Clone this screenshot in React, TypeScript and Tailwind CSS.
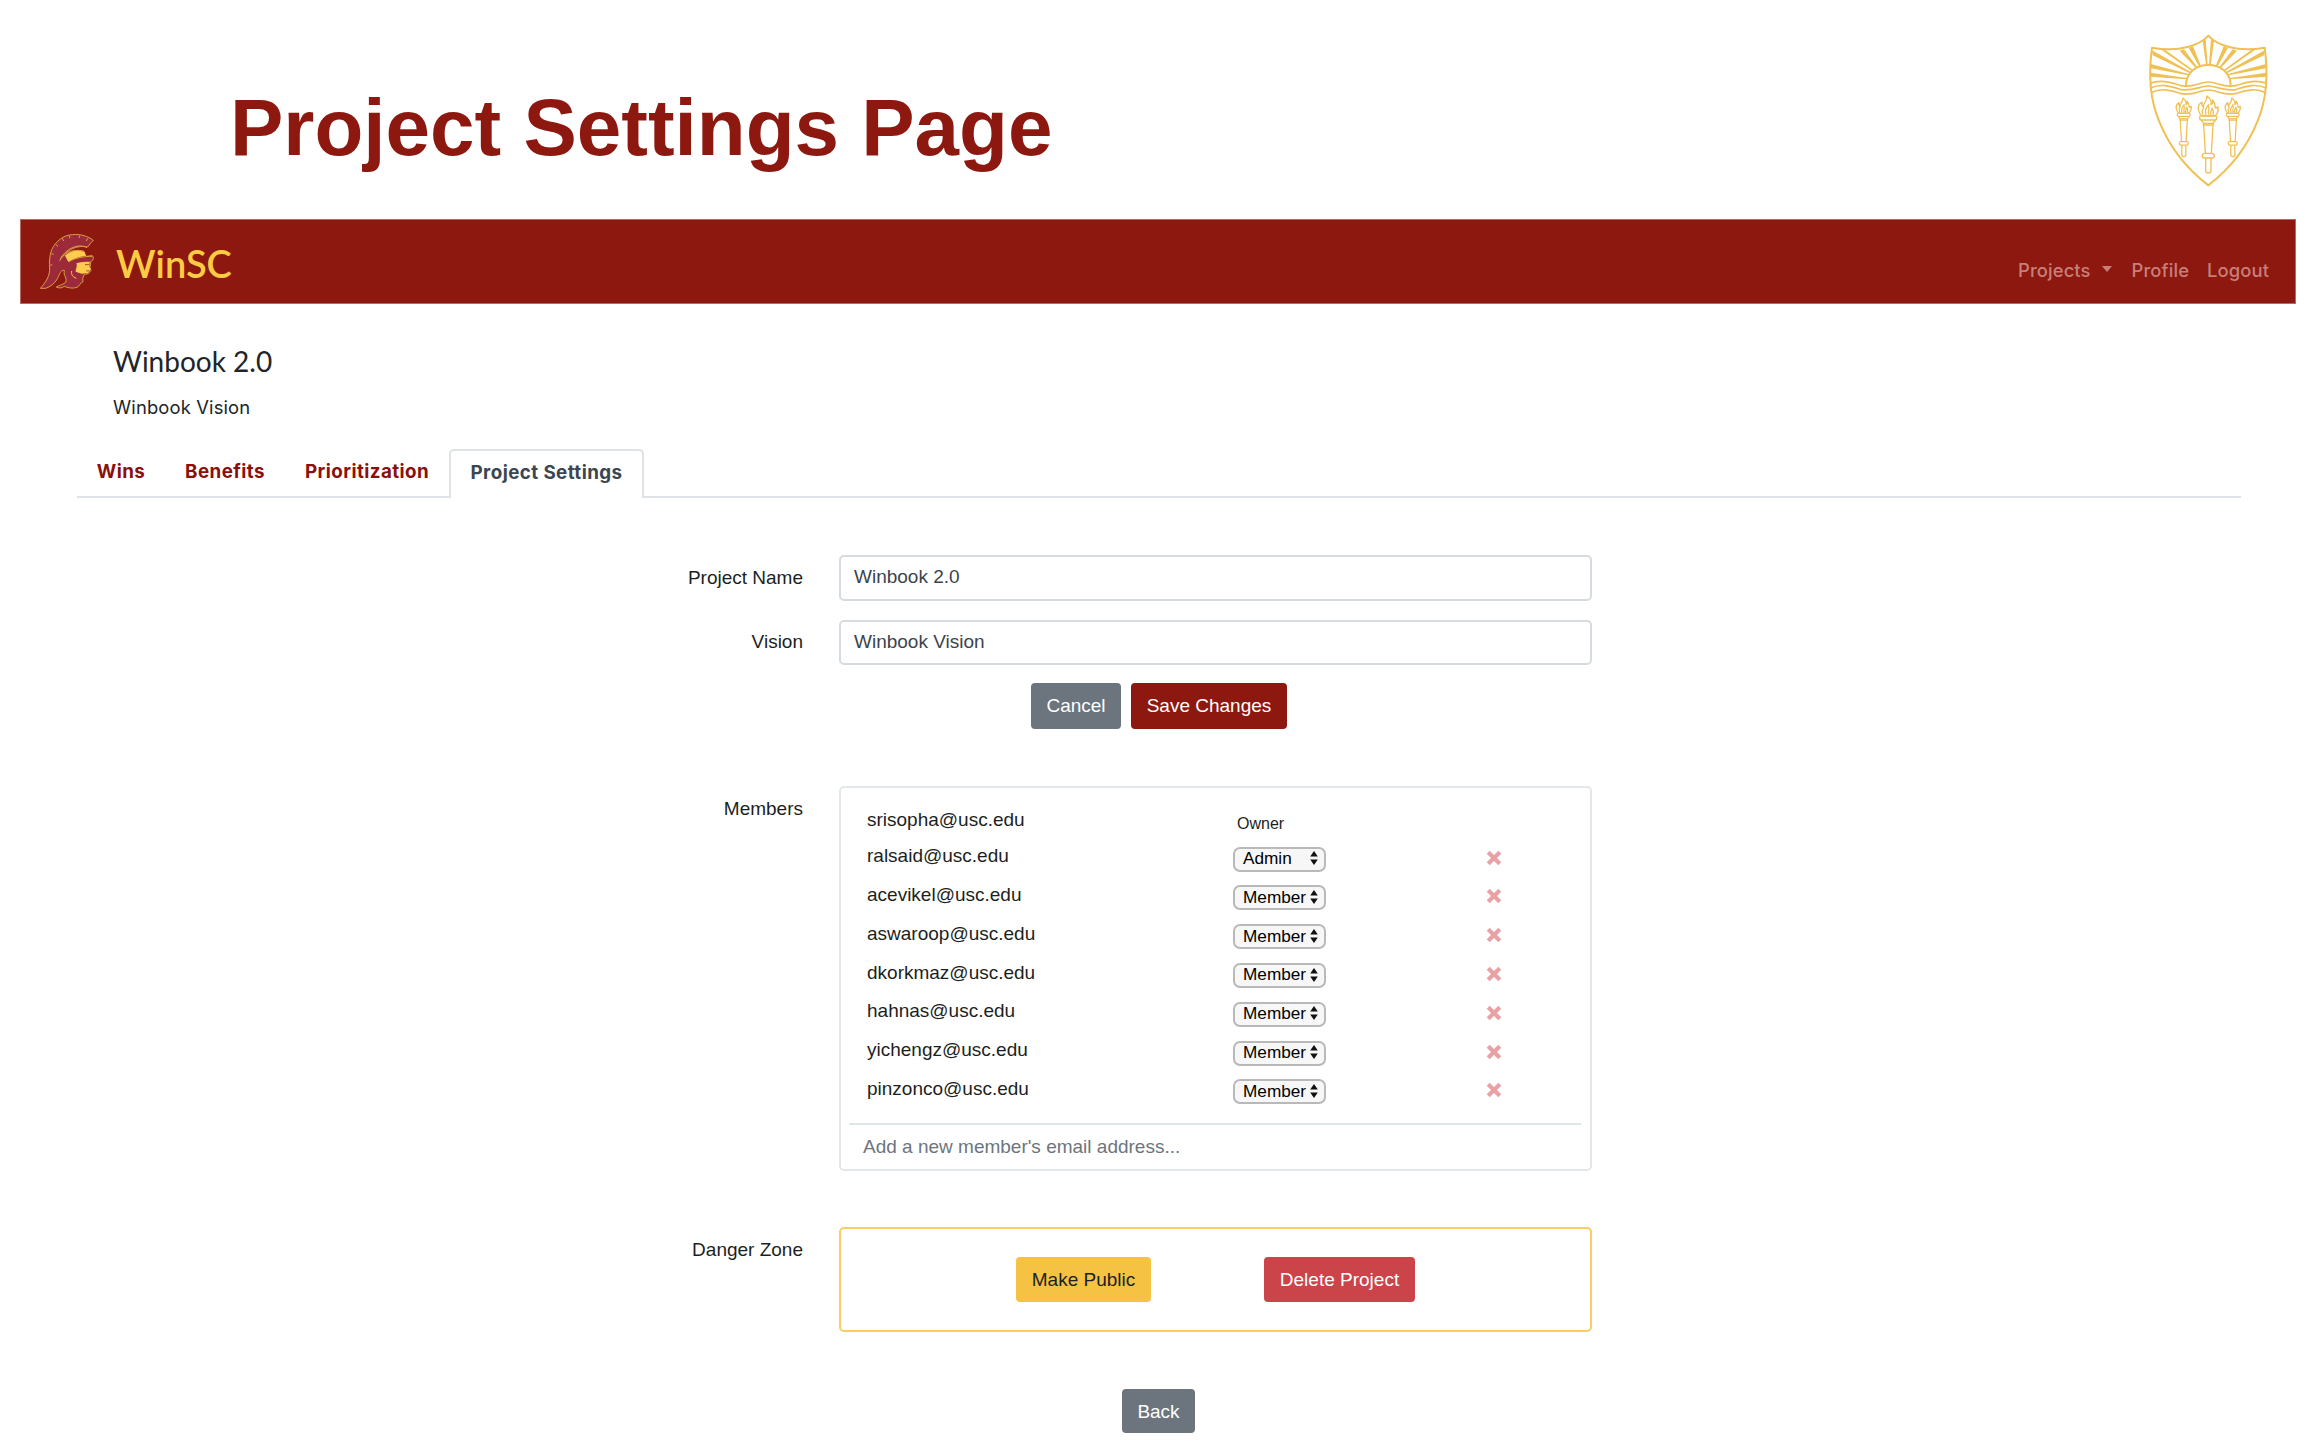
import React from "react";

const members = [
  { email: "ralsaid@usc.edu", role: "Admin" },
  { email: "acevikel@usc.edu", role: "Member" },
  { email: "aswaroop@usc.edu", role: "Member" },
  { email: "dkorkmaz@usc.edu", role: "Member" },
  { email: "hahnas@usc.edu", role: "Member" },
  { email: "yichengz@usc.edu", role: "Member" },
  { email: "pinzonco@usc.edu", role: "Member" },
];

function Torch() {
  return (
    <g>
      <path d="M237 275 C232 262 236 252 246 246 C244 254 246 258 250 262 C248 248 262 246 261 228 C272 236 276 244 273 254 C277 252 279 246 278 240 C285 248 285 256 286 264 C290 264 292 262 294 260 C296 272 292 282 284 288 L246 288 C240 284 238 280 237 275 Z" />
      <path d="M250 284 C244 274 246 268 252 264 M258 284 C252 270 260 262 266 254 C264 264 270 264 266 272 C262 278 266 280 268 284 M278 284 C282 278 280 270 276 264 C276 272 270 274 272 284" />
      <rect x="239" y="287" width="51" height="13" rx="6" />
      <path d="M243 300 C246 306 250 306 252 310 L278 310 C280 306 285 306 287 300" />
      <path d="M250 310 V315 H280 V310 M251 315 L256 400 M279 315 L274 400" />
      <rect x="247" y="400" width="36" height="14" rx="7" />
      <path d="M257 414 V452 C257 461 273 461 273 452 V414" />
    </g>
  );
}

function Shield() {
  return (
    <svg viewBox="0 0 540 540" className="h-[180px] w-[180px]" fill="none" stroke="#f0c052" strokeWidth="5" strokeLinejoin="round">
      <path strokeWidth="6" d="M265 47 C240 75 180 98 96 83 C84 170 90 240 118 305 C150 385 205 450 265 496 C325 450 380 385 412 305 C440 240 446 170 434 83 C350 98 290 75 265 47 Z" />
      <path d="M198 197 C198 158 228 135 265 135 C302 135 332 158 332 197" strokeWidth="6" />
      <g fill="#f0c052" stroke="none">
        <path d="M248 62 L257 58 L263 134 L258 134 Z M282 62 L273 58 L267 134 L272 134 Z" />
        <path d="M206 84 L219 79 L243 138 L238 140 Z M324 84 L311 79 L287 138 L292 140 Z" />
        <path d="M179 92 L192 88 L232 142 L228 145 Z M351 92 L338 88 L298 142 L302 145 Z" />
        <path d="M96 91 L98 106 L208 159 L211 155 Z M434 91 L432 106 L322 159 L319 155 Z" />
        <path d="M92 132 L92 145 L204 166 L206 162 Z M438 132 L438 145 L326 166 L324 162 Z" />
        <path d="M91 158 L91 170 L200 178 L200 174 Z M439 158 L439 170 L330 178 L330 174 Z" />
        <path d="M122 88 L136 90 L218 149 L215 153 Z M408 88 L394 90 L312 149 L315 153 Z" />
      </g>
      <path d="M91 190 C120 178 150 186 180 196 C215 206 240 186 265 186 C290 186 315 206 350 196 C380 186 410 178 439 190" />
      <path d="M92 204 C120 190 150 198 180 208 C215 216 240 198 265 198 C290 198 315 216 350 208 C380 198 410 190 438 204" />
      <path d="M94 218 C120 203 150 210 180 220 C215 230 240 210 265 210 C290 210 315 230 350 220 C380 210 410 203 436 218" />
      <g strokeWidth="4"><Torch /></g>
      <g strokeWidth="5" transform="translate(-10 61) scale(0.76)"><Torch /></g>
      <g strokeWidth="5" transform="translate(137 61) scale(0.76)"><Torch /></g>
    </svg>
  );
}

function Helmet() {
  return (
    <svg viewBox="0 0 192 192" className="-mt-px h-16 w-16" strokeLinejoin="round">
      <path
        d="M175 34 L168 41 L158 54 C138 50 118 54 100 66 C88 74 80 82 76 90 C84 82 90 76 98 70 C112 64 130 62 146 66 L153 82 L172 80 C178 86 174 96 167 98 L165 116 L168 124 L160 134 L148 136 L143 148 L144 158 C136 160 134 172 126 175 C112 180 98 176 88 172 C80 178 72 178 64 174 C74 168 86 166 92 160 C98 146 84 142 88 124 C78 122 74 134 68 148 C60 164 44 174 32 178 L16 178 C30 162 42 146 44 124 C42 100 44 78 50 62 C62 36 86 18 112 17 C136 14 160 22 175 34 Z"
        fill="#9d2a3b" stroke="#d6a03f" strokeWidth="3"
      />
      <path d="M90 80 C104 64 134 62 149 70 L152 80 C132 83 116 88 100 99 Z" fill="#ffcc4d" />
      <path d="M124 103 C136 99 150 98 164 98 L163 112 L167 121 L159 132 L140 134 L122 128 C122 120 128 112 124 103 Z" fill="#ffcc4d" />
      <path d="M150 107 L162 107 M154 126 L162 125" stroke="#9d2a3b" strokeWidth="2.5" />
      <path d="M110 126 C108 138 114 144 124 148" fill="none" stroke="#ffcc4d" strokeWidth="3" />
      <path d="M74 96 C82 74 104 54 130 51 C140 50 148 52 156 56 M102 98 C120 86 150 82 172 82" fill="none" stroke="#d6a03f" strokeWidth="3" />
      <path d="M104 20 V28 M134 19 L132 27 M158 28 L154 36 M82 28 L86 36 M62 46 L69 52 M49 74 L56 76 M45 108 L52 108" stroke="#d6a03f" strokeWidth="3" />
    </svg>
  );
}

function RoleSelect({ role }: { role: string }) {
  return (
    <div className="flex h-[25px] w-[93px] items-center justify-between rounded-[7px] border-2 border-[#b9b9b9] bg-[#f7f7f7] pl-[8px] pr-[6px] text-[17.2px] leading-none text-black">
      <span className="-mt-px">{role}</span>
      <svg viewBox="0 0 8 14" className="-mt-[2px] h-[14px] w-2 shrink-0">
        <path d="M4 0 L7.8 5.6 H0.2 Z M4 14 L7.8 8.4 H0.2 Z" fill="#111" />
      </svg>
    </div>
  );
}

function RemoveIcon() {
  return (
    <svg viewBox="0 0 16 16" className="-mt-[3px] h-4 w-4">
      <path d="M2.2 2.2 L13.8 13.8 M13.8 2.2 L2.2 13.8" stroke="#e8a2a6" strokeWidth="4.2" />
    </svg>
  );
}

const btn = "flex items-center justify-center rounded-[4px] text-[19px] leading-none ";
const label = "w-[703px] shrink-0 text-right text-[19px] leading-6 text-[#1c1f22] ";
const input = "flex w-[753px] items-center rounded-[5px] border-2 border-[#d5dbe0] pb-px pl-[13px] text-[19px] text-[#3b444d] ";

export default function App() {
  return (
    <div className="flex h-[1442px] w-[2320px] flex-col overflow-hidden bg-white font-['Liberation_Sans',Arial,sans-serif]">
      <div className="flex h-[219px] items-start justify-between pl-[231px] pr-5 pt-5">
        <h1 className="-ml-px mt-[62px] text-[80px] font-bold leading-[92px] text-[#8c1810]">Project Settings Page</h1>
        <Shield />
      </div>
      <nav className="mx-5 flex h-[85px] w-[2276px] items-center justify-between border border-[#b56a64] bg-[#8c1810] pl-[14px] pr-[26px]">
        <div className="flex items-center gap-[17px]">
          <Helmet />
          <span className="mt-[3px] font-['Lato'] text-[38px] font-semibold leading-none text-[#fbcb44]">WinSC</span>
        </div>
        <div className="mt-[17px] flex items-center font-['Inter'] text-[18.4px] font-medium leading-6 tracking-[0.1px] text-[#c97f79]">
          <span>Projects</span>
          <svg viewBox="0 0 10 6" className="-mt-[3px] ml-[11px] mr-[20px] h-[6px] w-[10px]"><path d="M0 0 H10 L5 6 Z" fill="currentColor" /></svg>
          <span>Profile</span>
          <span className="ml-[18px]">Logout</span>
        </div>
      </nav>
      <header className="h-[145px] pl-[113px] pt-[38px] text-[#212529]">
        <h2 className="font-['Lato'] text-[28px] leading-[38px]">Winbook 2.0</h2>
        <p className="mt-[15px] font-['Inter'] text-[18.4px] leading-6 tracking-[0.15px]">Winbook Vision</p>
      </header>
      <div className="ml-[77px] flex h-[49px] w-[2164px] items-end border-b-2 border-[#dee2e6] font-['Inter'] text-[18.8px] font-bold leading-none tracking-[0.42px] text-[#8b0f0c]">
        <div className="flex h-[47px] w-[88px] items-center justify-center">Wins</div>
        <div className="flex h-[47px] w-[120px] items-center justify-center">Benefits</div>
        <div className="flex h-[47px] w-[164px] items-center justify-center">Prioritization</div>
        <div className="-mb-[2px] flex h-[49px] w-[195px] items-center justify-center rounded-t-[5px] border-2 border-b-0 border-[#dee2e6] bg-white pb-[3px] text-[#3b4651]">Project Settings</div>
      </div>

      <main className="ml-[100px] flex flex-col text-[#1c1f22]">
        <div className="mt-[57px] flex items-center gap-[36px]">
          <label className={label + "-mt-px"}>Project Name</label>
          <div className={input + "h-[46px]"}>Winbook 2.0</div>
        </div>
        <div className="mt-[19px] flex items-center gap-[36px]">
          <label className={label + "-mt-px"}>Vision</label>
          <div className={input + "h-[45px]"}>Winbook Vision</div>
        </div>
        <div className="ml-[931px] mt-[18px] flex gap-[10px] text-white">
          <button className={btn + "h-[46px] w-[90px] bg-[#6c757d] pb-[2px]"}>Cancel</button>
          <button className={btn + "h-[46px] w-[156px] bg-[#8c1810] pb-[2px]"}>Save Changes</button>
        </div>

        <div className="mt-[57px] flex gap-[36px]">
          <label className={label + "mt-[11px]"}>Members</label>
          <div className="flex h-[385px] w-[753px] flex-col rounded-[5px] border-2 border-[#e2e7ec] px-2 pt-[13px] text-[19px]">
            <div className="grid h-[38.8px] grid-cols-[366px_221px_1fr] items-center pl-[18px]">
              <span className="leading-6">srisopha@usc.edu</span>
              <span className="mt-[8px] pl-[4px] text-[16px] leading-5">Owner</span>
            </div>
            {members.map((m) => (
              <div key={m.email} className="grid h-[38.8px] grid-cols-[366px_253px_1fr] items-center pl-[18px]">
                <span className="-mt-[6px] leading-6">{m.email}</span>
                <RoleSelect role={m.role} />
                <RemoveIcon />
              </div>
            ))}
            <div className="mr-[1px] mt-[12px] border-t-2 border-[#e0e5e7] pl-[14px] pt-[10px] leading-6 text-[#6c757d]">Add a new member's email address...</div>
          </div>
        </div>

        <div className="mt-[56px] flex gap-[36px]">
          <label className={label + "mt-[11px]"}>Danger Zone</label>
          <div className="flex h-[105px] w-[753px] items-center justify-center gap-[113px] rounded-[5px] border-2 border-[#f8cd66]">
            <button className={btn + "h-[45px] w-[135px] bg-[#f6c244]"}>Make Public</button>
            <button className={btn + "h-[45px] w-[151px] bg-[#cb444a] text-white"}>Delete Project</button>
          </div>
        </div>
        <button className={btn + "ml-[1022px] mt-[57px] h-[44px] w-[73px] bg-[#6c757d] text-white"}>Back</button>
      </main>
    </div>
  );
}
